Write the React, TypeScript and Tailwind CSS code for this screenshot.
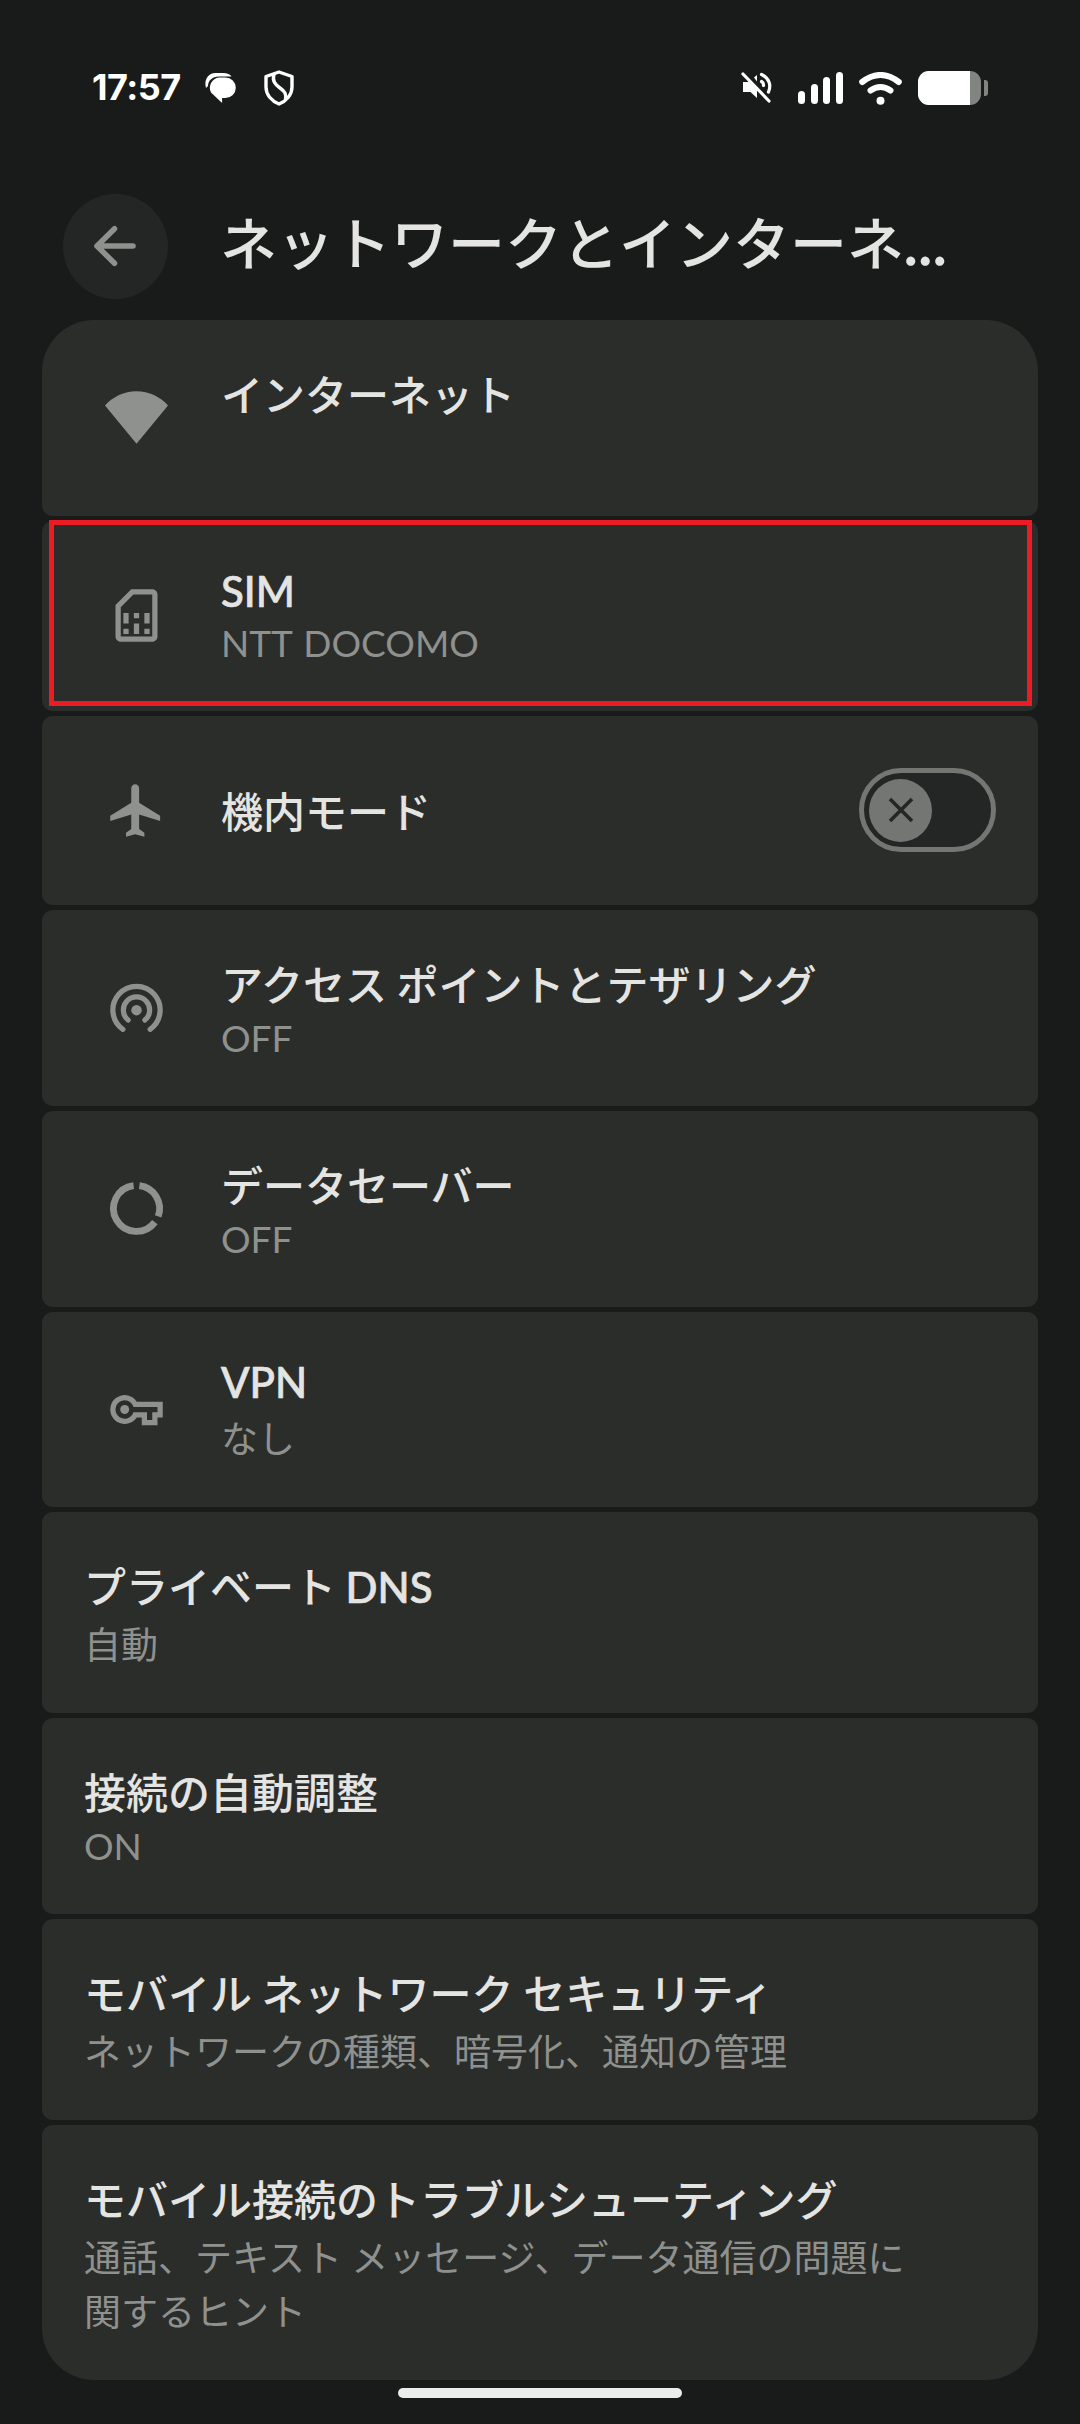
import type { ReactNode } from "react";
import { clsx } from "clsx";

type Item = {
  title: string;
  summary?: string;
  icon?: ReactNode;
  toggle?: boolean;
  highlighted?: boolean;
  className: string;
};

// Latin-only lines are set a little tighter than lines with Japanese text
const isLatin = (text: string) => /^[\x20-\x7e]+$/.test(text);

const Icon = ({ children }: { children: ReactNode }) => (
  <svg viewBox="0 0 24 24" className="h-[63px] w-[63px] shrink-0" fill="currentColor">
    {children}
  </svg>
);

const WifiIcon = () => (
  <Icon>
    <path d="M12 22L0 7.4C3 4.1 7.25 2 12 2s9 2.1 12 5.4z" />
  </Icon>
);

const SimIcon = () => (
  <Icon>
    <path d="M18 2h-8L4 8v12c0 1.1.9 2 2 2h12c1.1 0 2-.9 2-2V4c0-1.1-.9-2-2-2zm0 18H6V8.83L10.83 4H18v16z" />
    <path d="M7 17h2v2H7zM15 17h2v2h-2zM7 11h2v4H7zM11 15h2v4h-2zM11 11h2v2h-2zM15 11h2v4h-2z" />
  </Icon>
);

const AirplaneIcon = () => (
  <Icon>
    <path d="M21 16v-2l-8-5V3.5c0-.83-.67-1.5-1.5-1.5S10 2.67 10 3.5V9l-8 5v2l8-2.5V19l-2 1.5V22l3.5-1 3.5 1v-1.5L13 19v-5.5l8 2.5z" />
  </Icon>
);

const HotspotIcon = () => (
  <Icon>
    <circle cx="12" cy="13" r="2" />
    <g fill="none" stroke="currentColor" strokeWidth="2" strokeLinecap="round">
      <path d="M6.8 20.3A9 9 0 1 1 17.2 20.3" />
      <path d="M8.8 16.8A5 5 0 1 1 15.2 16.8" />
    </g>
  </Icon>
);

const DataIcon = () => (
  <Icon>
    <g fill="none" stroke="currentColor" strokeWidth="2.6">
      <path d="M13.1 3.3A8.75 8.75 0 0 1 20.25 15" />
      <path d="M19 17.2A8.75 8.75 0 1 1 10.9 3.3" />
    </g>
  </Icon>
);

const KeyIcon = () => (
  <Icon>
    <circle cx="7.5" cy="12" r="1.7" />
    <path
      fillRule="evenodd"
      d="M12.1 9H22v6h-2v3h-6v-3h-1.9A5.5 5.5 0 1 1 12.1 9zM10.85 11A3.5 3.5 0 1 0 10.85 13H16v3h2v-3h2v-2z"
    />
  </Icon>
);

const items: Item[] = [
  { title: "インターネット", icon: <WifiIcon />, className: "h-[196px] rounded-t-[52px]" },
  { title: "SIM", summary: "NTT DOCOMO", icon: <SimIcon />, highlighted: true, className: "h-[190px]" },
  { title: "機内モード", icon: <AirplaneIcon />, toggle: true, className: "h-[189px]" },
  { title: "アクセス ポイントとテザリング", summary: "OFF", icon: <HotspotIcon />, className: "h-[196px]" },
  { title: "データセーバー", summary: "OFF", icon: <DataIcon />, className: "h-[196px]" },
  { title: "VPN", summary: "なし", icon: <KeyIcon />, className: "h-[195px]" },
  { title: "プライベート DNS", summary: "自動", className: "h-[201px]" },
  { title: "接続の自動調整", summary: "ON", className: "h-[196px]" },
  {
    title: "モバイル ネットワーク セキュリティ",
    summary: "ネットワークの種類、暗号化、通知の管理",
    className: "h-[201px]",
  },
  {
    title: "モバイル接続のトラブルシューティング",
    summary: "通話、テキスト メッセージ、データ通信の問題に関するヒント",
    className: "h-[255px] rounded-b-[52px]",
  },
];

const StatusBar = () => (
  <header className="flex h-[176px] shrink-0 items-center justify-between px-[92px] text-white">
    <div className="flex items-center">
      <span className="-mt-[2px] w-[113px] font-['Inter'] text-[36px] font-bold leading-[44px] tracking-[-0.5px]">17:57</span>
      <svg className="h-[32px] w-[32px]" viewBox="0 0 32 32" fill="currentColor">
        <path d="M1 16C-1.5 7.5 4 1 10 1H18C22.5 1 25 2.5 26.5 4.5H14C7 4.5 3 9 3 14Z" />
        <path d="M14 5.5h6.5a10.3 10.3 0 0 1 0 20.6h-3.400V31L6 20.5A10.3 10.3 0 0 1 14 5.5z" />
      </svg>
      <svg className="ml-[27px] h-[36px] w-[30px]" viewBox="0 0 30 36" fill="none" stroke="currentColor" strokeWidth="3.4" strokeLinejoin="round">
        <path d="M15 2L28 6.5V17C28 25 22 31 15 34C8 31 2 25 2 17V6.5Z" />
        <path d="M10 4C8 11 11 14.5 16 18C21 21.5 22.5 24 21.5 29.5" />
      </svg>
    </div>
    <div className="flex items-center">
      <svg className="h-[32px] w-[32px]" viewBox="0 0 32 32" fill="currentColor">
        <path d="M2 10H8L16 17V26L9.5 20H2z" />
        <path d="M13 5.5L16 3V9.5z" />
        <g fill="none" stroke="currentColor" strokeWidth="3.2" strokeLinecap="round">
          <path d="M20.5 2.5C28 6 30.5 13 27.5 20" />
          <path d="M20.5 9.5C22.2 10.5 22.7 12 22.5 13.5" />
          <path d="M2 2L28 29" />
        </g>
      </svg>
      <div className="ml-[25px] flex h-[32px] items-end gap-[5.6px]">
        <span className="h-[13px] w-[7px] rounded-full bg-white" />
        <span className="h-[20px] w-[7px] rounded-full bg-white" />
        <span className="h-[27px] w-[7px] rounded-full bg-white" />
        <span className="h-[32px] w-[7px] rounded-full bg-white" />
      </div>
      <svg className="ml-[16px] h-[33px] w-[43px]" viewBox="0 0 43 33" fill="none" stroke="currentColor" strokeWidth="6" strokeLinecap="round">
        <path d="M3.2 10Q21.5-4 39.8 10" />
        <path d="M11.5 18.5Q21.5 11.5 31.5 18.5" />
        <circle cx="21.5" cy="28.7" r="4" fill="currentColor" stroke="none" />
      </svg>
      <div className="ml-[16px] flex items-center gap-[3px]">
        <div className="h-[34px] w-[63px] overflow-hidden rounded-[11px] bg-[#828482]">
          <div className="h-full w-[52px] bg-white" />
        </div>
        <span className="h-[16px] w-[4px] rounded-r-[3px] bg-[#828482]" />
      </div>
    </div>
  </header>
);

const Toggle = () => (
  <button
    aria-label="機内モード"
    className="mr-[42px] mt-[52px] flex h-[84px] w-[137px] shrink-0 items-center rounded-full border-5 border-[#747673] bg-[#242625] pl-[5px]"
  >
    <span className="flex h-[63px] w-[63px] items-center justify-center rounded-full bg-[#747673] text-[#242625]">
      <svg viewBox="0 0 26 26" className="h-[26px] w-[26px]" fill="none" stroke="currentColor" strokeWidth="3.6">
        <path d="M2 2L24 24M24 2L2 24" />
      </svg>
    </span>
  </button>
);

// Thickens Latin words so they weigh the same as the medium kana
const Title = ({ text }: { text: string }) => (
  <>
    {text.split(/([A-Z]+)/).map((part, index) =>
      /^[A-Z]+$/.test(part) ? (
        <span key={index} className="[-webkit-text-stroke:0.7px_#e4e4e2]">
          {part}
        </span>
      ) : (
        part
      )
    )}
  </>
);

const SettingRow = ({ item }: { item: Item }) => (
  <li className={clsx("relative flex shrink-0 rounded-[11px] bg-[#2b2d2a]", item.className)}>
    {item.icon && <div className="flex w-[179px] items-center pb-px pl-[63px] text-[#8f918e]">{item.icon}</div>}
    <div
      className={clsx(
        "min-w-0 flex-1",
        !item.icon && "pl-[42px] pr-[120px]",
        item.toggle ? "pt-[65px]" : "pt-[44px]"
      )}
    >
      <h2
        className={clsx(
          "whitespace-nowrap text-[42px] font-medium text-[#e4e4e2] [word-spacing:-1px]",
          isLatin(item.title) ? "mb-[4px] leading-[52px]" : "-mb-px leading-[63px]"
        )}
      >
        <Title text={item.title} />
      </h2>
      {item.summary && (
        <p
          className={clsx(
            "text-[37px] text-[#8f918e]",
            isLatin(item.summary) ? "leading-[44px] [word-spacing:2px]" : "leading-[54px]"
          )}
        >
          {item.summary}
        </p>
      )}
    </div>
    {item.toggle && <Toggle />}
    {item.highlighted && (
      <div className="absolute -top-px left-[7px] h-[186px] w-[983px] border-5 border-[#ed1c24]" />
    )}
  </li>
);

const App = () => {
  return (
    <div lang="ja" className="flex h-[2424px] w-[1080px] flex-col overflow-hidden bg-[#191b1a] font-['Lato','Noto_Sans_CJK_JP',sans-serif]">
      <StatusBar />
      <div className="flex h-[144px] shrink-0 items-start pl-[63px] pt-[18px]">
        <button aria-label="戻る" className="h-[105px] w-[105px] rounded-full bg-[#242625] text-[#8f918e]">
          <svg viewBox="0 0 105 105" fill="none" stroke="currentColor" strokeWidth="5.5" strokeLinecap="round" strokeLinejoin="round">
            <path d="M51.5 34.7L34 52L51.5 69.3M34 52H70" />
          </svg>
        </button>
        <h1 className="ml-[52px] whitespace-nowrap text-[57px] font-medium leading-[99px] text-[#e4e4e2]">
          ネットワークとインターネ
          <span className="tracking-[1px] [-webkit-text-stroke:1.5px_#e4e4e2]">...</span>
        </h1>
      </div>
      <ul className="flex flex-col gap-[5px] px-[42px]">
        {items.map((item) => (
          <SettingRow key={item.title} item={item} />
        ))}
      </ul>
      <div className="mx-auto mt-[8px] h-[10px] w-[284px] shrink-0 rounded-full bg-[#ececec]" />
    </div>
  );
};

export default App;
